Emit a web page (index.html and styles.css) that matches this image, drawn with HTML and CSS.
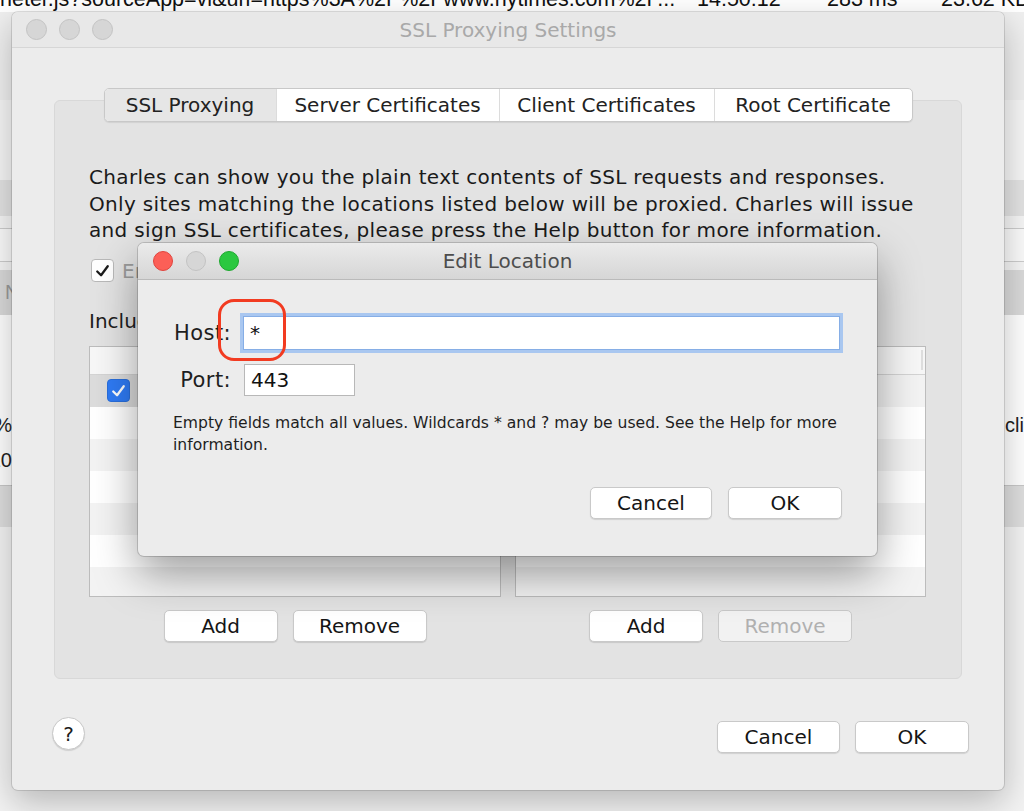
FILE: index.html
```html
<!DOCTYPE html>
<html lang="en">
<head>
  <meta charset="UTF-8">
  <title>SSL Proxying Settings</title>
  <link rel="stylesheet" href="styles.css">
</head>
<body>
  <!-- the Charles main window behind the settings window -->
  <div class="backdrop">
    <div class="bg-top">
      <span class="bg-url">neter.js?sourceApp=vi&amp;url=https%3A%2F%2Fwww.nytimes.com%2F...</span>
      <span class="bg-time">14:50:12</span>
      <span class="bg-dur">283 ms</span>
      <span class="bg-size">23.62 KB</span>
    </div>
    <div class="band s1"></div>
    <div class="band s2"></div>
    <div class="band s3"></div>
    <div class="band s4"></div>
    <div class="band s5"></div>
    <div class="band s6"></div>
    <div class="band s7"><span class="bg-head">Name</span></div>
    <div class="band s8">
      <div class="bg-line"><span class="bg-left">23%</span><span class="bg-right">click</span></div>
      <div class="bg-line"><span class="bg-left">10</span></div>
    </div>
    <div class="band s9"></div>
  </div>

  <div class="window">
    <div class="titlebar">
      <div class="lights">
        <span class="light off"></span>
        <span class="light off"></span>
        <span class="light off"></span>
      </div>
      <div class="title">SSL Proxying Settings</div>
      <div></div>
    </div>

    <div class="content">
      <div class="panel">
        <div class="tabs">
          <div class="tab t-ssl active">SSL Proxying</div>
          <div class="tab t-server">Server Certificates</div>
          <div class="tab t-client">Client Certificates</div>
          <div class="tab t-root">Root Certificate</div>
        </div>

        <p class="intro">Charles can show you the plain text contents of SSL requests and responses.<br>Only sites matching the locations listed below will be proxied. Charles will issue<br>and sign SSL certificates, please press the Help button for more information.</p>

        <label class="enable">
          <span class="check">
            <svg width="22" height="22" viewBox="0 0 22 22"><path d="M5.5 11.5 L9.5 15.5 L16.5 6" fill="none" stroke="#1a1a1a" stroke-width="2.4" stroke-linecap="round" stroke-linejoin="round"/></svg>
          </span>
          Enable SSL Proxying
        </label>

        <div class="include">Include</div>

        <div class="lists">
          <div class="col">
            <div class="table">
              <div class="thead"></div>
              <div class="row selected">
                <span class="check blue">
                  <svg width="22" height="22" viewBox="0 0 22 22"><path d="M5.5 11.5 L9.5 15.5 L16.5 6" fill="none" stroke="#fff" stroke-width="2.4" stroke-linecap="round" stroke-linejoin="round"/></svg>
                </span>
              </div>
              <div class="row"></div>
              <div class="row"></div>
              <div class="row"></div>
              <div class="row"></div>
              <div class="row"></div>
              <div class="row"></div>
            </div>
            <div class="btn-row">
              <button class="btn w-add">Add</button>
              <button class="btn w-remove">Remove</button>
            </div>
          </div>
          <div class="col">
            <div class="table">
              <div class="thead"><span class="thead-grip"></span></div>
              <div class="row"></div>
              <div class="row"></div>
              <div class="row"></div>
              <div class="row"></div>
              <div class="row"></div>
              <div class="row"></div>
              <div class="row"></div>
            </div>
            <div class="btn-row">
              <button class="btn w-add">Add</button>
              <button class="btn w-remove disabled">Remove</button>
            </div>
          </div>
        </div>
      </div>
    </div>

    <div class="footer">
      <button class="help">?</button>
      <div class="footer-actions">
        <button class="btn w-cancel">Cancel</button>
        <button class="btn w-ok">OK</button>
      </div>
    </div>
  </div>

  <!-- Edit Location sheet -->
  <div class="sheet">
    <div class="sheet-title">
      <div class="lights small">
        <span class="light red"></span>
        <span class="light off"></span>
        <span class="light green"></span>
      </div>
      <div class="title dark">Edit Location</div>
      <div></div>
    </div>
    <div class="sheet-body">
      <div class="fields">
        <label class="field-label">Host:</label>
        <div class="input host focus">*</div>
        <label class="field-label">Port:</label>
        <div class="input port">443</div>
      </div>
      <p class="hint">Empty fields match all values. Wildcards * and ? may be used. See the Help for more<br>information.</p>
      <div class="sheet-actions">
        <button class="btn w-dcancel">Cancel</button>
        <button class="btn w-ok">OK</button>
      </div>
    </div>
  </div>

  <div class="callout"></div>
</body>
</html>
```

FILE: styles.css
```css
* {
  box-sizing: border-box;
}
body {
  margin: 0;
  width: 1024px;
  height: 811px;
  overflow: hidden;
  position: relative;
  background: #f3f3f3;
  font-family: "DejaVu Sans", "Liberation Sans", sans-serif;
  color: #1e1e1e;
}
button {
  font-family: inherit;
}

/* backdrop */
.backdrop {
  display: flex;
  flex-direction: column;
}
.bg-top {
  height: 12px;
  overflow: hidden;
  background: #fff;
  display: flex;
  white-space: nowrap;
  font-family: "Liberation Sans", sans-serif;
  font-size: 21.5px;
  line-height: 20px;
  color: #111;
}
.bg-top span {
  margin-top: -11px;
  overflow: hidden;
}
.bg-url { width: 697px; flex-shrink: 0; }
.bg-time { width: 130px; flex-shrink: 0; }
.bg-dur { width: 114px; flex-shrink: 0; }
.band { flex-shrink: 0; }
.s1 { height: 88px; background: #efefef; }
.s2 { height: 80px; background: #f6f6f6; }
.s3 { height: 36px; background: #e3e3e3; }
.s4 { height: 13px; background: #f6f6f6; border-bottom: 1px solid #cdcdcd; }
.s5 { height: 33px; background: #fbfbfb; border-bottom: 1px solid #cdcdcd; }
.s6 { height: 8px; background: #f6f6f6; }
.s7 {
  height: 45px;
  background: #dadada;
  padding-left: 5px;
  font-family: "Liberation Sans", sans-serif;
  font-size: 20px;
  line-height: 45px;
  color: #9a9a9a;
}
.s8 {
  height: 170px;
  background: #fff;
  padding-top: 93px;
  font-family: "Liberation Sans", sans-serif;
  font-size: 20px;
}
.bg-line {
  height: 35px;
  line-height: 35px;
  display: flex;
  justify-content: space-between;
}
.bg-left {
  width: 12px;
  display: flex;
  justify-content: flex-end;
  white-space: nowrap;
}
.bg-right {
  width: 19px;
  white-space: nowrap;
  overflow: hidden;
}
.s9 { height: 42px; background: #dedede; border-top: 1px solid #c8c8c8; }

/* settings window */
.window {
  position: absolute;
  left: 12px;
  top: 12px;
  width: 992px;
  height: 778px;
  background: #ececec;
  border-radius: 6px;
  box-shadow: 0 0 0 1px rgba(0,0,0,0.12), 0 12px 34px rgba(0,0,0,0.25);
  display: flex;
  flex-direction: column;
  overflow: hidden;
}
.titlebar {
  height: 36px;
  flex-shrink: 0;
  display: grid;
  grid-template-columns: 1fr auto 1fr;
  align-items: center;
  background: #e8e8e8;
  border-bottom: 1px solid #d6d6d6;
}
.lights {
  display: flex;
  gap: 12px;
  padding-left: 14px;
}
.light {
  width: 21px;
  height: 21px;
  border-radius: 50%;
  background: #d3d3d3;
  border: 1px solid #c6c6c6;
}
.lights.small {
  gap: 13px;
  padding-left: 15px;
}
.lights.small .light {
  width: 20px;
  height: 20px;
}
.light.red { background: #fc5f57; border-color: #e0443e; }
.light.green { background: #2bc840; border-color: #1ea82f; }
.light.off { background: #d6d6d6; border-color: #c3c3c3; }
.title {
  font-size: 20px;
  color: #a9a9a9;
}
.title.dark {
  color: #4d4d4d;
}

.content {
  padding: 52px 42px 0;
}
.panel {
  height: 579px;
  background: #e3e3e3;
  border: 1px solid #d8d8d8;
  border-radius: 6px;
  display: flex;
  flex-direction: column;
}
.tabs {
  align-self: center;
  display: flex;
  margin-top: -13px;
  background: #fff;
  border: 1px solid #c8c8c8;
  border-radius: 5px;
  box-shadow: 0 1px 1px rgba(0,0,0,0.08);
  overflow: hidden;
}
.tab {
  height: 32px;
  font-size: 20px;
  line-height: 32px;
  text-align: center;
  color: #222;
  border-left: 1px solid #dcdcdc;
}
.tab:first-child {
  border-left: none;
}
.tab.active {
  background: #e6e6e6;
}
.t-ssl { width: 171px; }
.t-server { width: 223px; }
.t-client { width: 215px; }
.t-root { width: 198px; }
.intro {
  margin: 42px 0 0 34px;
  font-size: 20px;
  letter-spacing: 0.33px;
  line-height: 26.5px;
  white-space: nowrap;
  color: #1a1a1a;
}
.enable {
  display: flex;
  align-items: center;
  gap: 8px;
  margin: 15px 0 0 36px;
  font-size: 20px;
  color: #9c9c9c;
}
.check {
  width: 23px;
  height: 23px;
  background: #fff;
  border: 1px solid #b9b9b9;
  border-radius: 4px;
  display: flex;
  align-items: center;
  justify-content: center;
  flex-shrink: 0;
}
.check.blue {
  background: #2f7bf5;
  border-color: #2a6fdc;
}
.include {
  margin: 26px 0 0 34px;
  font-size: 20px;
  line-height: 24px;
}
.lists {
  display: grid;
  grid-template-columns: 412px 411px;
  column-gap: 14px;
  margin: 13px 0 0 34px;
}
.col {
  display: flex;
  flex-direction: column;
  align-items: center;
}
.table {
  width: 100%;
  height: 251px;
  background: #fff;
  border: 1px solid #bcbcbc;
  overflow: hidden;
}
.thead {
  height: 28px;
  background: #f7f7f7;
  border-bottom: 1px solid #d4d4d4;
  display: flex;
  justify-content: flex-end;
  align-items: center;
}
.thead-grip {
  width: 2px;
  height: 20px;
  margin-right: 2px;
  background: #dedede;
}
.row {
  height: 32px;
  display: flex;
  align-items: center;
  padding-left: 17px;
}
.row:nth-child(even) {
  background: #f3f3f3;
}
.row.selected {
  background: #dcdcdc;
}
.btn-row {
  display: flex;
  gap: 15px;
  margin-top: 13px;
}
.btn {
  height: 32px;
  background: #fff;
  border: 1px solid #c9c9c9;
  border-radius: 5px;
  box-shadow: 0 1px 1px rgba(0,0,0,0.12);
  font-size: 20px;
  color: #151515;
  padding: 0;
  cursor: pointer;
}
.btn.disabled {
  background: #f2f2f2;
  color: #b0b0b0;
  box-shadow: none;
}
.w-add { width: 114px; }
.w-remove { width: 134px; }
.w-cancel { width: 123px; }
.w-dcancel { width: 122px; }
.w-ok { width: 114px; }

.footer {
  display: flex;
  align-items: flex-start;
  padding: 38px 35px 0 40px;
}
.help {
  width: 33px;
  height: 33px;
  border-radius: 50%;
  background: #fff;
  border: 1px solid #c8c8c8;
  box-shadow: 0 1px 1px rgba(0,0,0,0.12);
  font-size: 20px;
  color: #1a1a1a;
  padding: 0;
}
.footer-actions {
  margin-left: auto;
  margin-top: 4px;
  display: flex;
  gap: 15px;
}

/* Edit Location sheet */
.sheet {
  position: absolute;
  left: 138px;
  top: 243px;
  width: 739px;
  height: 313px;
  background: #ececec;
  border-radius: 6px;
  box-shadow: 0 0 0 1px rgba(0,0,0,0.16), 0 18px 44px rgba(0,0,0,0.38);
  overflow: hidden;
}
.sheet-title {
  height: 37px;
  display: grid;
  grid-template-columns: 1fr auto 1fr;
  align-items: center;
  background: linear-gradient(#ebebeb, #d6d6d6);
  border-bottom: 1px solid #bababa;
}
.sheet-body {
  padding: 36px 35px 0 0;
}
.fields {
  display: grid;
  grid-template-columns: 93px auto;
  column-gap: 12px;
  row-gap: 14px;
  align-items: center;
  justify-items: start;
}
.field-label {
  justify-self: end;
  font-size: 21px;
  letter-spacing: 0.4px;
  color: #1e1e1e;
}
.input {
  background: #fff;
  border: 1px solid #b8b8b8;
  font-size: 20px;
  padding-left: 6px;
  color: #111;
}
.input.host {
  width: 597px;
  height: 34px;
  line-height: 32px;
}
.input.focus {
  border-color: #86aee6;
  box-shadow: 0 0 0 3px #a9c7f0;
}
.input.port {
  width: 111px;
  height: 32px;
  line-height: 30px;
  margin-left: 1px;
}
.hint {
  margin: 16px 0 0 35px;
  font-size: 15.6px;
  line-height: 22px;
  white-space: nowrap;
  color: #1e1e1e;
}
.sheet-actions {
  display: flex;
  justify-content: flex-end;
  gap: 16px;
  margin-top: 31px;
}

.callout {
  position: absolute;
  left: 218px;
  top: 299px;
  width: 68px;
  height: 62px;
  border: 3.5px solid #f23b21;
  border-radius: 16px;
}
```
